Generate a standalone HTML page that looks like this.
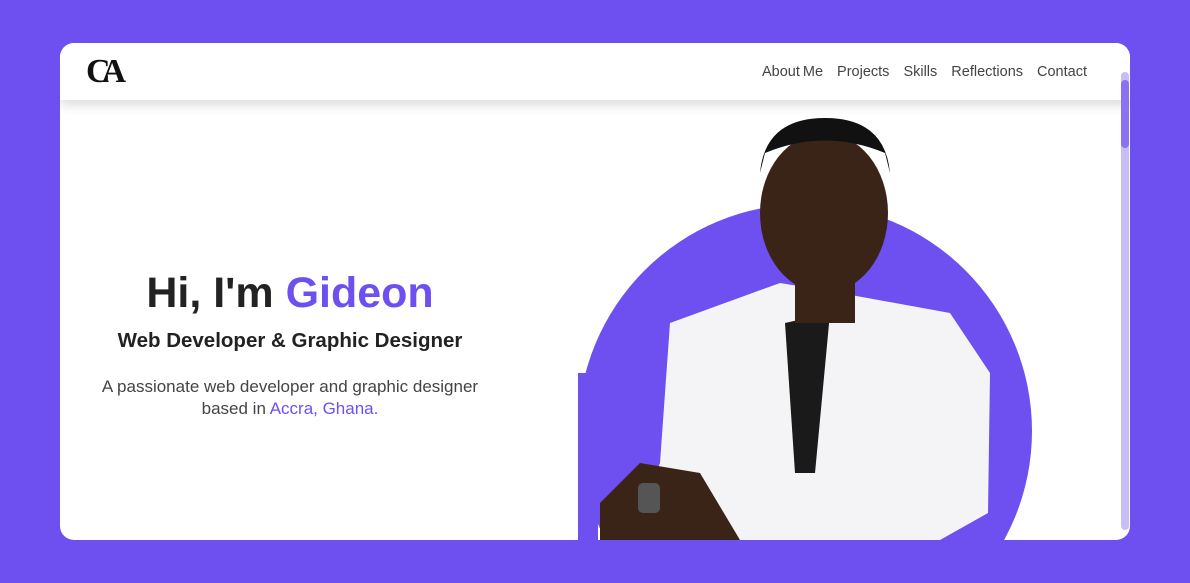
<!DOCTYPE html>
<html><head><style>
html,body{margin:0;width:1190px;height:583px;overflow:hidden}
body{background:#6e50f0;font-family:"Liberation Sans",sans-serif;position:relative}
.card{position:absolute;left:60px;top:43px;width:1070px;height:497px;background:#fff;border-radius:14px;overflow:hidden}
.nav{position:absolute;left:0;top:0;width:1070px;height:57px;background:#fff;box-shadow:0 6px 10px rgba(0,0,0,.12);z-index:3}
.logo{position:absolute;left:26px;top:10px;font-family:"Liberation Serif",serif;font-weight:bold;font-size:34px;letter-spacing:-9px;color:#111}
.links{position:absolute;right:43px;top:21px;font-size:14.5px;color:#444;word-spacing:-1px}
.links span{margin-left:14px}
.track{position:absolute;left:1061px;top:29px;width:8px;height:458px;background:#c9bdf8;border-radius:4px;z-index:4}
.thumb{position:absolute;left:1061px;top:37px;width:8px;height:68px;background:#8b72f2;border-radius:4px;z-index:5}
.txt{position:absolute;left:0;width:460px;text-align:center;color:#222}
h1{margin:0;font-size:43px;font-weight:bold}
.p{color:#6e50f0}
</style></head><body>
<div class="card">
<div class="nav"><div class="logo">CA</div><div class="links"><span>About Me</span><span>Projects</span><span>Skills</span><span>Reflections</span><span>Contact</span></div></div>
<div class="txt" style="top:226px"><h1>Hi, I'm <span class="p">Gideon</span></h1></div>
<div class="txt" style="top:286px;font-size:20.5px;font-weight:bold">Web Developer &amp; Graphic Designer</div>
<div class="txt" style="top:333px;font-size:17px;color:#444;line-height:22px">A passionate web developer and graphic designer<br>based in <span class="p">Accra, Ghana.</span></div>
<svg style="position:absolute;left:0;top:0" width="1070" height="497">
<circle cx="745" cy="388" r="227" fill="#6e50f0"/>
<rect x="518" y="330" width="20" height="170" fill="#6e50f0"/>
<path d="M610 280 L720 240 L780 250 L890 270 L930 330 L928 470 L880 497 L570 497 L600 420 Z" fill="#f4f4f6"/>
<path d="M725 280 L770 270 L755 430 L735 430 Z" fill="#1a1a1a"/>
<path d="M540 460 L580 420 L640 430 L680 497 L540 497 Z" fill="#3a2418"/>
<rect x="578" y="440" width="22" height="30" rx="5" fill="#555"/>
<ellipse cx="764" cy="170" rx="64" ry="80" fill="#3a2418"/>
<path d="M700 130 Q705 75 765 75 Q825 75 830 130 L825 110 Q765 85 705 110 Z" fill="#111"/>
<rect x="735" y="220" width="60" height="60" fill="#3a2418"/>
</svg>
<div class="track"></div><div class="thumb"></div>
</div>
</body></html>
